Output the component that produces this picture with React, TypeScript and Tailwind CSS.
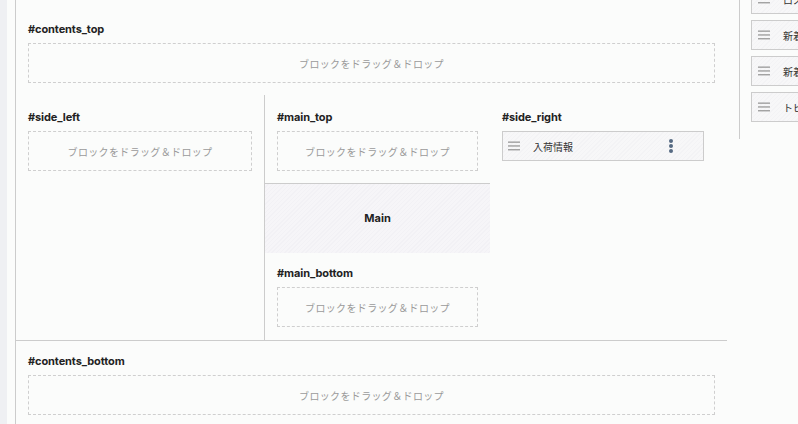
const font = "font-['Inter','Noto_Sans_CJK_JP',sans-serif]"

const Label = ({ children }: { children: string }) => (
  <h3 className="text-[11px] leading-4 font-bold text-[#222] tracking-[-0.1px]">{children}</h3>
)

const DropZone = () => (
  <div className="mt-[6px] h-10 border border-dashed border-[#cfcfcf] flex items-center justify-center">
    <span className="text-[10px] tracking-[0.35px] text-[#9a9a9a] font-['Noto_Sans_CJK_JP',sans-serif]">
      ブロックをドラッグ＆ドロップ
    </span>
  </div>
)

const Handle = () => (
  <svg width="12" height="10" viewBox="0 0 12 10" className="shrink-0">
    <rect x="0" y="0.5" width="12" height="1.3" fill="#9a9a9a" />
    <rect x="0" y="4.3" width="12" height="1.3" fill="#9a9a9a" />
    <rect x="0" y="8.1" width="12" height="1.3" fill="#9a9a9a" />
  </svg>
)

const stripes =
  "bg-[image:repeating-linear-gradient(135deg,#f7f7f8_0px,#f7f7f8_2px,#f3f3f5_2px,#f3f3f5_3px)]"

const Block = ({ title }: { title: string }) => (
  <div className={`mt-[6px] h-[30px] border border-[#cccccc] ${stripes} flex items-center pl-[5px] pr-[29px]`}>
    <Handle />
    <span className="ml-[13px] text-[10px] text-[#333] font-['Noto_Sans_CJK_JP',sans-serif]">{title}</span>
    <svg width="6" height="16" viewBox="0 0 6 16" className="ml-auto">
      <circle cx="3" cy="3" r="2" fill="#566a82" />
      <circle cx="3" cy="8" r="2" fill="#566a82" />
      <circle cx="3" cy="13" r="2" fill="#566a82" />
    </svg>
  </div>
)

const PanelItem = ({ title }: { title: string }) => (
  <div className={`h-[30px] border border-[#cccccc] ${stripes} flex items-center pl-[6px] overflow-hidden`}>
    <Handle />
    <span className="ml-[13px] text-[10px] text-[#333] whitespace-nowrap font-['Noto_Sans_CJK_JP',sans-serif]">{title}</span>
  </div>
)

export default function App() {
  return (
    <div className={`w-[798px] h-[424px] overflow-hidden bg-[#fbfcfb] flex items-start ${font}`}>
      <div className="w-[7px] h-full shrink-0 bg-[#eff0f3]" />
      <div className="w-[8px] shrink-0" />

      {/* layout editor */}
      <div className="w-[712px] min-h-full shrink-0 border-l border-[#cccccc]">
        <section className="px-3 pt-[21px] pb-3">
          <Label>#contents_top</Label>
          <DropZone />
        </section>

        <div className="flex pr-3">
          <section className="w-[248px] shrink-0 px-3 pt-[14px]">
            <Label>#side_left</Label>
            <DropZone />
          </section>

          <div className="w-[226px] shrink-0 border-l border-[#cccccc]">
            <section className="px-3 pt-[14px] pb-3 border-b border-[#cccccc]">
              <Label>#main_top</Label>
              <DropZone />
            </section>
            <div className="h-[69px] bg-[image:repeating-linear-gradient(135deg,#f6f5f8_0px,#f6f5f8_2px,#f2f1f5_2px,#f2f1f5_3px)] flex items-center justify-center">
              <span className="text-[11px] font-bold text-[#222]">Main</span>
            </div>
            <section className="px-3 pt-3 pb-[13px]">
              <Label>#main_bottom</Label>
              <DropZone />
            </section>
          </div>

          <section className="w-[226px] shrink-0 px-3 pt-[14px]">
            <Label>#side_right</Label>
            <Block title="入荷情報" />
          </section>
        </div>

        <section className="px-3 pt-3 pb-3 border-t border-[#cccccc]">
          <Label>#contents_bottom</Label>
          <DropZone />
        </section>
      </div>

      {/* block list panel */}
      <div className="w-[12px] shrink-0" />
      <div className="flex-1 border-l border-[#cccccc] pl-[11px] pb-[17px] -mt-[16px] flex flex-col gap-[6px]">
        <PanelItem title="ロスト" />
        <PanelItem title="新着情報" />
        <PanelItem title="新着商品" />
        <PanelItem title="トピック" />
      </div>
    </div>
  )
}
